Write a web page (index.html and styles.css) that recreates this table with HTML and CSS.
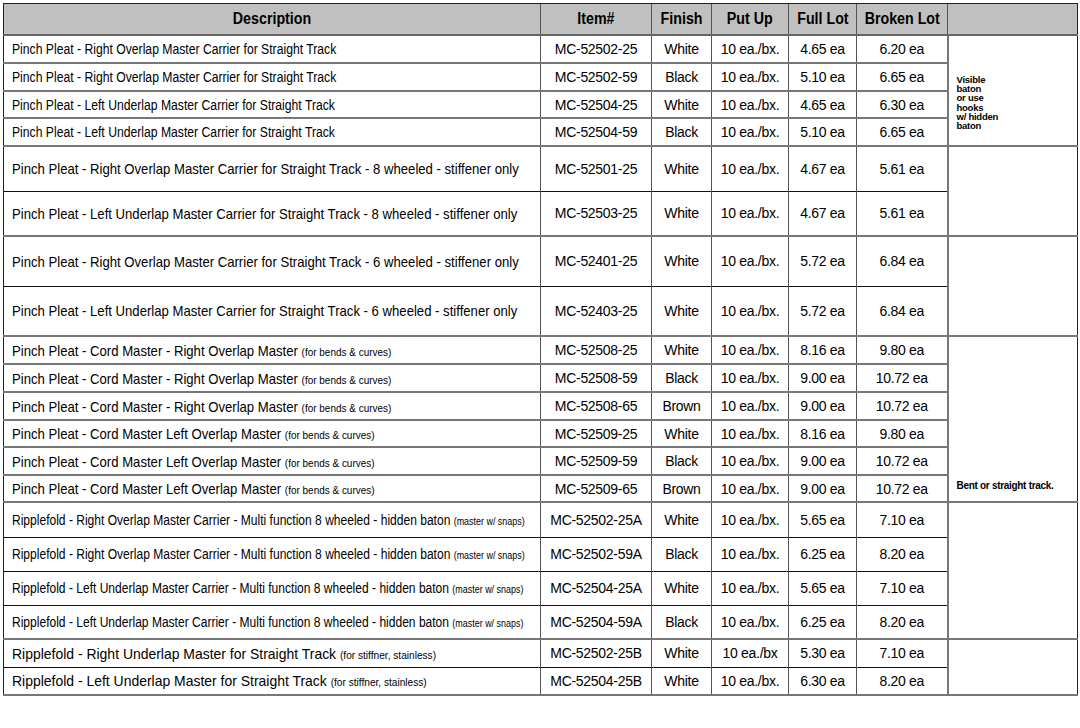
FILE: index.html
```html
<!DOCTYPE html>
<html>
<head>
<meta charset="utf-8">
<link rel="stylesheet" href="styles.css">
</head>
<body>
<div class="wrap">
<table class="prices">
  <colgroup>
    <col class="c-desc"><col class="c-item"><col class="c-fin"><col class="c-put"><col class="c-full"><col class="c-brk"><col class="c-note">
  </colgroup>
  <thead>
    <tr class="hdr">
      <th><span class="h">Description</span></th><th><span class="h">Item#</span></th><th><span class="h">Finish</span></th><th><span class="h">Put Up</span></th><th><span class="h">Full Lot</span></th><th><span class="h">Broken Lot</span></th><th></th>
    </tr>
  </thead>
  <tbody>
    <tr class="r28 gtop ga">
      <td class="desc"><span class="t">Pinch Pleat - Right Overlap Master Carrier for Straight Track</span></td><td>MC-52502-25</td><td>White</td><td>10 ea./bx.</td><td>4.65 ea</td><td>6.20 ea</td>
      <td class="note top" rowspan="4"><span class="note-bold">Visible<br>baton<br>or use<br>hooks<br>w/ hidden<br>baton</span></td>
    </tr>
    <tr class="r28 g ga"><td class="desc"><span class="t">Pinch Pleat - Right Overlap Master Carrier for Straight Track</span></td><td>MC-52502-59</td><td>Black</td><td>10 ea./bx.</td><td>5.10 ea</td><td>6.65 ea</td></tr>
    <tr class="r27 g ga"><td class="desc"><span class="t">Pinch Pleat - Left Underlap Master Carrier for Straight Track</span></td><td>MC-52504-25</td><td>White</td><td>10 ea./bx.</td><td>4.65 ea</td><td>6.30 ea</td></tr>
    <tr class="r28 g ga"><td class="desc"><span class="t">Pinch Pleat - Left Underlap Master Carrier for Straight Track</span></td><td>MC-52504-59</td><td>Black</td><td>10 ea./bx.</td><td>5.10 ea</td><td>6.65 ea</td></tr>

    <tr class="r45 gtop gb"><td class="desc"><span class="t">Pinch Pleat - Right Overlap Master Carrier for Straight Track - 8 wheeled - stiffener only</span></td><td>MC-52501-25</td><td>White</td><td>10 ea./bx.</td><td>4.67 ea</td><td>5.61 ea</td><td class="note" rowspan="2"></td></tr>
    <tr class="r45 b gb"><td class="desc"><span class="t">Pinch Pleat - Left Underlap Master Carrier for Straight Track - 8 wheeled - stiffener only</span></td><td>MC-52503-25</td><td>White</td><td>10 ea./bx.</td><td>4.67 ea</td><td>5.61 ea</td></tr>

    <tr class="r50 gtop gb"><td class="desc"><span class="t">Pinch Pleat - Right Overlap Master Carrier for Straight Track - 6 wheeled - stiffener only</span></td><td>MC-52401-25</td><td>White</td><td>10 ea./bx.</td><td>5.72 ea</td><td>6.84 ea</td><td class="note" rowspan="2"></td></tr>
    <tr class="r50 b gb"><td class="desc"><span class="t">Pinch Pleat - Left Underlap Master Carrier for Straight Track - 6 wheeled - stiffener only</span></td><td>MC-52403-25</td><td>White</td><td>10 ea./bx.</td><td>5.72 ea</td><td>6.84 ea</td></tr>

    <tr class="r28 gtop gc"><td class="desc"><span class="t">Pinch Pleat - Cord Master - Right Overlap Master <small>(for bends &amp; curves)</small></span></td><td>MC-52508-25</td><td>White</td><td>10 ea./bx.</td><td>8.16 ea</td><td>9.80 ea</td>
      <td class="note bottom" rowspan="6"><span class="note-bold note-line">Bent or straight track.</span></td></tr>
    <tr class="r28 g gc"><td class="desc"><span class="t">Pinch Pleat - Cord Master - Right Overlap Master <small>(for bends &amp; curves)</small></span></td><td>MC-52508-59</td><td>Black</td><td>10 ea./bx.</td><td>9.00 ea</td><td>10.72 ea</td></tr>
    <tr class="r28 g gc"><td class="desc"><span class="t">Pinch Pleat - Cord Master - Right Overlap Master <small>(for bends &amp; curves)</small></span></td><td>MC-52508-65</td><td>Brown</td><td>10 ea./bx.</td><td>9.00 ea</td><td>10.72 ea</td></tr>
    <tr class="r27 g gc"><td class="desc"><span class="t">Pinch Pleat - Cord Master Left Overlap Master <small>(for bends &amp; curves)</small></span></td><td>MC-52509-25</td><td>White</td><td>10 ea./bx.</td><td>8.16 ea</td><td>9.80 ea</td></tr>
    <tr class="r28 g gc"><td class="desc"><span class="t">Pinch Pleat - Cord Master Left Overlap Master <small>(for bends &amp; curves)</small></span></td><td>MC-52509-59</td><td>Black</td><td>10 ea./bx.</td><td>9.00 ea</td><td>10.72 ea</td></tr>
    <tr class="r27 g gc"><td class="desc"><span class="t">Pinch Pleat - Cord Master Left Overlap Master <small>(for bends &amp; curves)</small></span></td><td>MC-52509-65</td><td>Brown</td><td>10 ea./bx.</td><td>9.00 ea</td><td>10.72 ea</td></tr>

    <tr class="r35 gtop gd"><td class="desc"><span class="t">Ripplefold - Right Overlap Master Carrier - Multi function 8 wheeled - hidden baton <small>(master w/ snaps)</small></span></td><td>MC-52502-25A</td><td>White</td><td>10 ea./bx.</td><td>5.65 ea</td><td>7.10 ea</td><td class="note" rowspan="4"></td></tr>
    <tr class="r34 b gd"><td class="desc"><span class="t">Ripplefold - Right Overlap Master Carrier - Multi function 8 wheeled - hidden baton <small>(master w/ snaps)</small></span></td><td>MC-52502-59A</td><td>Black</td><td>10 ea./bx.</td><td>6.25 ea</td><td>8.20 ea</td></tr>
    <tr class="r34 b gd"><td class="desc"><span class="t">Ripplefold - Left Underlap Master Carrier - Multi function 8 wheeled - hidden baton <small>(master w/ snaps)</small></span></td><td>MC-52504-25A</td><td>White</td><td>10 ea./bx.</td><td>5.65 ea</td><td>7.10 ea</td></tr>
    <tr class="r34 b gd"><td class="desc"><span class="t">Ripplefold - Left Underlap Master Carrier - Multi function 8 wheeled - hidden baton <small>(master w/ snaps)</small></span></td><td>MC-52504-59A</td><td>Black</td><td>10 ea./bx.</td><td>6.25 ea</td><td>8.20 ea</td></tr>

    <tr class="r28 gtop ge"><td class="desc"><span class="t">Ripplefold - Right Underlap Master for Straight Track <small>(for stiffner, stainless)</small></span></td><td>MC-52502-25B</td><td>White</td><td>10 ea./bx</td><td>5.30 ea</td><td>7.10 ea</td><td class="note" rowspan="2"></td></tr>
    <tr class="r28 b last ge"><td class="desc"><span class="t">Ripplefold - Left Underlap Master for Straight Track <small>(for stiffner, stainless)</small></span></td><td>MC-52504-25B</td><td>White</td><td>10 ea./bx.</td><td>6.30 ea</td><td>8.20 ea</td></tr>
  </tbody>
</table>
</div>
</body>
</html>
```
FILE: styles.css
```css
html, body {
  margin: 0;
  padding: 0;
  background: #ffffff;
}
.wrap {
  padding: 3px 0 0 3px;
}
.prices {
  border-collapse: collapse;
  table-layout: fixed;
  width: 1074px;
  font-family: "Liberation Sans", Arial, sans-serif;
  color: #000;
  font-size: 14px;
  letter-spacing: -0.3px;
}
.c-desc { width: 537px; }
.c-item { width: 111px; }
.c-fin { width: 60px; }
.c-put { width: 77px; }
.c-full { width: 68px; }
.c-brk { width: 91px; }
.c-note { width: 130px; }

.prices th {
  background: #c0c0c0;
  font-weight: bold;
  font-size: 16px;
  letter-spacing: 0;
  height: 30px;
  padding: 0;
  text-align: center;
  white-space: nowrap;
  border-left: 1px solid #555;
  border-top: 1px solid #222;
  border-bottom: 2px solid #666;
}
.prices th:first-child { border-left: 1px solid #222; }
.prices th:last-child { border-right: 1px solid #222; }
.h {
  display: inline-block;
  transform: scaleX(0.89);
  transform-origin: center center;
}

.prices td {
  padding: 0;
  text-align: center;
  vertical-align: middle;
  border-left: 1px solid #555;
  border-right: 1px solid #555;
  white-space: nowrap;
}
.prices td.desc {
  text-align: left;
  padding-left: 8px;
  border-left: 1px solid #222;
  letter-spacing: 0;
}
.t {
  display: inline-block;
  transform-origin: left center;
}
.ga .desc { font-size: 14px; }
.ga .t { transform: scaleX(0.87); }
.gb .desc { font-size: 15px; }
.gb .t { transform: scaleX(0.875); }
.gc .desc { font-size: 15px; }
.gc .t { transform: scaleX(0.875); }
.gd .desc { font-size: 14px; }
.gd .t { transform: scaleX(0.86); }
.ge .desc { font-size: 15px; }
.ge .t { transform: scaleX(0.93); }

.prices small { letter-spacing: 0; }
.gc small { font-size: 11.4px; }
.gd small { font-size: 10.4px; }
.ge small { font-size: 10.9px; }

.prices td.note {
  text-align: left;
  padding-left: 8px;
  border-right: 1px solid #222;
  border-left: 2px solid #777;
  border-top: 2px solid #777;
  border-bottom: 2px solid #777;
}
.prices td.note.top {
  vertical-align: top;
  padding-top: 39px;
}
.prices td.note.bottom {
  vertical-align: bottom;
  padding-bottom: 9px;
}
.note-bold {
  display: inline-block;
  font-weight: bold;
  font-size: 9.5px;
  line-height: 9.2px;
  letter-spacing: -0.25px;
}
.note-line { font-size: 10px; line-height: 12px; letter-spacing: -0.3px; }

.prices tr.g td { border-top: 2px solid #777; }
.prices tr.b td { border-top: 1px solid #111; }
.prices tr.gtop td { border-top: 2px solid #777; }
.prices tr.last td { border-bottom: 2px solid #777; }

.r27 { height: 27px; }
.r28 { height: 28px; }
.r34 { height: 34px; }
.r35 { height: 35px; }
.r45 { height: 45px; }
.r50 { height: 50px; }
```
